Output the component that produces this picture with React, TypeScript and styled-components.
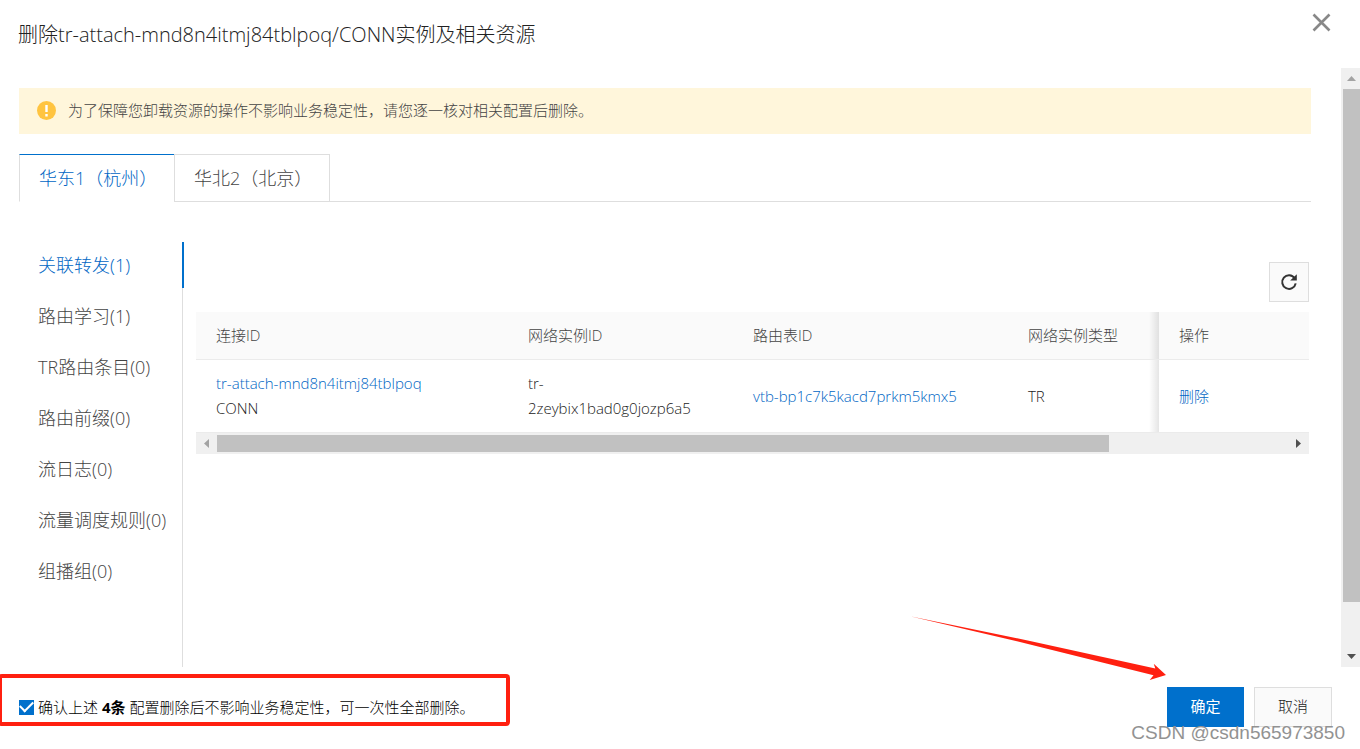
import React, { useState } from "react";
import styled, { createGlobalStyle, css } from "styled-components";

const color = {
  blue: "#0070cc",
  link: "#0066c4",
  red: "#ff2010",
  text: "#222222",
  muted: "#444444",
  line: "#dedede",
  soft: "#ebebeb",
  panel: "#fafafa",
  track: "#f0f0f0",
  thumb: "#c1c1c1",
};

const GlobalStyle = createGlobalStyle`
  * { box-sizing: border-box; }
  body {
    margin: 0;
    background: #fff;
    color: ${color.text};
    font-family: "Open Sans", "Noto Sans CJK SC", sans-serif;
    font-size: 15px;
    font-weight: 300;
    line-height: 25px;
  }
  button, input { font: inherit; color: inherit; margin: 0; }
  a { color: ${color.link}; text-decoration: none; }
  b { font-weight: 700; }
`;

const Dialog = styled.div`
  position: relative;
  display: flex;
  flex-direction: column;
  height: 100vh;
  overflow: hidden;
`;

const Header = styled.header`
  display: flex;
  flex: none;
  justify-content: space-between;
  align-items: flex-start;
  height: 68px;
  padding: 0 29px 0 18px;
`;

const Title = styled.h1`
  margin: 0;
  font-size: 20px;
  font-weight: 300;
  line-height: 70px;
`;

const CloseButton = styled.button`
  display: flex;
  margin-top: 13px;
  padding: 0;
  border: 0;
  background: none;
  cursor: pointer;
`;

const Body = styled.div`
  display: flex;
  flex: 1;
  min-height: 0;
`;

const Content = styled.main`
  display: flex;
  flex: 1;
  flex-direction: column;
  min-width: 0;
  padding: 20px 30px 0 19px;
`;

const Notice = styled.div`
  display: flex;
  flex: none;
  align-items: center;
  gap: 12px;
  height: 46px;
  padding: 0 18px 1px;
  background: #fff6db;
  color: ${color.muted};
`;

const Tabs = styled.div`
  display: flex;
  flex: none;
  height: 48px;
  margin-top: 20px;
  box-shadow: inset 0 -1px ${color.line};
`;

const Tab = styled.button<{ $active: boolean }>`
  width: 156px;
  padding: 0 19px;
  border: 1px solid ${color.line};
  background: #fff;
  color: ${color.muted};
  font-size: 18px;
  text-align: left;
  white-space: nowrap;
  cursor: pointer;
  & + & { margin-left: -1px; }
  ${(p) =>
    p.$active &&
    css`
      border-top-color: ${color.blue};
      border-bottom-color: #fff;
      border-right-color: #fff;
      color: ${color.link};
    `}
`;

const Panel = styled.div`
  display: flex;
  flex: 1;
  gap: 12px;
  min-height: 0;
  padding-top: 40px;
`;

const SideNav = styled.nav`
  display: flex;
  flex: none;
  flex-direction: column;
  gap: 5px;
  width: 165px;
  box-shadow: inset -1px 0 #fff, inset -2px 0 ${color.line};
`;

const NavItem = styled.button<{ $active: boolean }>`
  height: 46px;
  padding: 1px 0 0 19px;
  border: 0;
  border-right: 2px solid ${(p) => (p.$active ? color.blue : "transparent")};
  background: none;
  color: ${(p) => (p.$active ? color.link : color.muted)};
  font-size: 18px;
  text-align: left;
  white-space: nowrap;
  cursor: pointer;
`;

const TableArea = styled.section`
  display: flex;
  flex: 1;
  flex-direction: column;
  min-width: 0;
  padding: 20px 2px 0 0;
`;

const RefreshButton = styled.button`
  display: flex;
  align-self: flex-end;
  align-items: center;
  justify-content: center;
  width: 40px;
  height: 40px;
  margin-bottom: 10px;
  padding: 0;
  border: 1px solid ${color.line};
  background: ${color.panel};
  cursor: pointer;
`;

const Table = styled.table`
  width: 100%;
  border-collapse: separate;
  border-spacing: 0;
  table-layout: fixed;
`;

const cell = css<{ $fixed?: boolean }>`
  position: relative;
  padding: 11px 20px;
  border-bottom: 1px solid ${color.soft};
  text-align: left;
  font-weight: inherit;
  ${(p) =>
    p.$fixed &&
    css`
      &::before {
        content: "";
        position: absolute;
        top: 0;
        bottom: 0;
        right: 100%;
        width: 10px;
        background: linear-gradient(to right, rgba(0, 0, 0, 0), rgba(0, 0, 0, 0.1));
      }
    `}
`;

const HeadCell = styled.th`
  ${cell}
  height: 48px;
  background: ${color.panel};
  color: ${color.muted};
`;

const DataCell = styled.td`
  ${cell}
  height: 73px;
`;

const Line = styled.div``;

const HScroll = styled.div`
  display: flex;
  align-items: center;
  height: 21px;
  background: ${color.track};
`;

const VScroll = styled.div`
  display: flex;
  flex: none;
  flex-direction: column;
  width: 19px;
  padding-left: 2px;
  background: ${color.track};
`;

const ScrollButton = styled.button`
  display: flex;
  flex: none;
  align-items: center;
  justify-content: center;
  width: 21px;
  height: 21px;
  padding: 0;
  border: 0;
  background: none;
  ${VScroll} & { width: 17px; }
`;

const Rail = styled.div`
  flex: 1;
`;

const HThumb = styled.div`
  width: 83.3%;
  height: 17px;
  background: ${color.thumb};
`;

const VThumb = styled.div`
  height: 92.1%;
  background: ${color.thumb};
`;

const Footer = styled.footer`
  display: flex;
  flex: none;
  align-items: flex-start;
  justify-content: space-between;
  height: 82px;
  padding-right: 28px;
`;

const Highlight = styled.div`
  display: flex;
  align-items: center;
  width: 512px;
  height: 52px;
  margin: 7px 0 0 -2px;
  padding: 14px 0 0 17px;
  border: 4px solid ${color.red};
  border-radius: 4px;
  color: #000;
`;

const CheckLabel = styled.label`
  display: flex;
  align-items: center;
  white-space: pre;
`;

const Checkbox = styled.input`
  display: grid;
  place-items: center;
  width: 15px;
  height: 15px;
  margin-right: 4px;
  border: 1px solid ${color.blue};
  background: #fff;
  appearance: none;
  &:checked { background: ${color.blue}; }
  &:checked::after {
    content: "";
    width: 11px;
    height: 6px;
    margin-bottom: 4px;
    border: solid #fff;
    border-width: 0 0 2px 2px;
    transform: rotate(-45deg);
  }
`;

const Actions = styled.div`
  display: flex;
  gap: 10px;
  margin-top: 20px;
`;

const Button = styled.button<{ $primary?: boolean }>`
  width: ${(p) => (p.$primary ? 77 : 78)}px;
  height: 40px;
  padding: 0 0 2px;
  border: 1px solid ${(p) => (p.$primary ? color.blue : color.line)};
  background: ${(p) => (p.$primary ? color.blue : color.panel)};
  color: ${(p) => (p.$primary ? "#fff" : color.text)};
  font-weight: ${(p) => (p.$primary ? 400 : 300)};
  cursor: pointer;
`;

const Arrow = styled.svg`
  position: absolute;
  right: 190px;
  bottom: 64px;
  pointer-events: none;
`;

const Watermark = styled.div`
  position: absolute;
  right: 15px;
  bottom: 4px;
  color: #929292;
  font-family: "Liberation Sans", sans-serif;
  font-size: 19px;
  text-shadow: 1px 1px #fff;
  pointer-events: none;
`;

const triangles = {
  up: "0,5 9,5 4.5,0",
  down: "0,0 9,0 4.5,5",
  left: "5,0 5,9 0,4.5",
  right: "0,0 0,9 5,4.5",
};

function Triangle({ dir, fill }: { dir: keyof typeof triangles; fill: string }) {
  const upright = dir === "up" || dir === "down";
  return (
    <svg width={upright ? 9 : 5} height={upright ? 5 : 9} aria-hidden="true">
      <polygon points={triangles[dir]} fill={fill} />
    </svg>
  );
}

const regions = ["华东1（杭州）", "华北2（北京）"];
const sections = [
  "关联转发(1)",
  "路由学习(1)",
  "TR路由条目(0)",
  "路由前缀(0)",
  "流日志(0)",
  "流量调度规则(0)",
  "组播组(0)",
];

export default function App() {
  const [region, setRegion] = useState(0);
  const [section, setSection] = useState(0);
  const [confirmed, setConfirmed] = useState(true);

  return (
    <>
      <GlobalStyle />
      <Dialog role="dialog" aria-labelledby="dialog-title">
        <Header>
          <Title id="dialog-title">删除tr-attach-mnd8n4itmj84tblpoq/CONN实例及相关资源</Title>
          <CloseButton aria-label="关闭">
            <svg width="19" height="19" fill="none" stroke="#888" strokeWidth="2.6">
              <path d="M1.5 1.5l16 16M17.5 1.5l-16 16" />
            </svg>
          </CloseButton>
        </Header>

        <Body>
          <Content>
            <Notice role="alert">
              <svg width="19" height="19" aria-hidden="true">
                <circle cx="9.5" cy="9.5" r="9.5" fill="#ffc440" />
                <path d="M9.5 4v7M9.5 13v2.4" stroke="#fff" strokeWidth="2.4" />
              </svg>
              为了保障您卸载资源的操作不影响业务稳定性，请您逐一核对相关配置后删除。
            </Notice>

            <Tabs role="tablist">
              {regions.map((name, i) => (
                <Tab
                  key={name}
                  role="tab"
                  aria-selected={i === region}
                  $active={i === region}
                  onClick={() => setRegion(i)}
                >
                  {name}
                </Tab>
              ))}
            </Tabs>

            <Panel>
              <SideNav>
                {sections.map((name, i) => (
                  <NavItem key={name} $active={i === section} onClick={() => setSection(i)}>
                    {name}
                  </NavItem>
                ))}
              </SideNav>

              <TableArea>
                <RefreshButton aria-label="刷新">
                  <svg width="18" height="18" viewBox="0 0 18 18" fill="none">
                    <path
                      d="M14.6 5.2A6.8 6.8 0 1 0 15.7 10.4"
                      stroke="#333"
                      strokeWidth="2"
                    />
                    <path d="M16.8 1.2V7.6H10.2z" fill="#333" />
                  </svg>
                </RefreshButton>
                <Table>
                  <colgroup>
                    <col />
                    <col width="225" />
                    <col width="275" />
                    <col width="151" />
                    <col width="150" />
                  </colgroup>
                  <thead>
                    <tr>
                      <HeadCell>连接ID</HeadCell>
                      <HeadCell>网络实例ID</HeadCell>
                      <HeadCell>路由表ID</HeadCell>
                      <HeadCell>网络实例类型</HeadCell>
                      <HeadCell $fixed>操作</HeadCell>
                    </tr>
                  </thead>
                  <tbody>
                    <tr>
                      <DataCell>
                        <Line>
                          <a href="#attachment">tr-attach-mnd8n4itmj84tblpoq</a>
                        </Line>
                        <Line>CONN</Line>
                      </DataCell>
                      <DataCell>
                        tr-
                        <br />
                        2zeybix1bad0g0jozp6a5
                      </DataCell>
                      <DataCell>
                        <a href="#route-table">vtb-bp1c7k5kacd7prkm5kmx5</a>
                      </DataCell>
                      <DataCell>TR</DataCell>
                      <DataCell $fixed>
                        <a href="#delete">删除</a>
                      </DataCell>
                    </tr>
                  </tbody>
                </Table>
                <HScroll>
                  <ScrollButton aria-label="向左滚动">
                    <Triangle dir="left" fill="#a3a3a3" />
                  </ScrollButton>
                  <Rail>
                    <HThumb />
                  </Rail>
                  <ScrollButton aria-label="向右滚动">
                    <Triangle dir="right" fill="#505050" />
                  </ScrollButton>
                </HScroll>
              </TableArea>
            </Panel>
          </Content>

          <VScroll>
            <ScrollButton aria-label="向上滚动">
              <Triangle dir="up" fill="#a3a3a3" />
            </ScrollButton>
            <Rail>
              <VThumb />
            </Rail>
            <ScrollButton aria-label="向下滚动">
              <Triangle dir="down" fill="#505050" />
            </ScrollButton>
          </VScroll>
        </Body>

        <Footer>
          <Highlight>
            <CheckLabel>
              <Checkbox
                type="checkbox"
                checked={confirmed}
                onChange={(e) => setConfirmed(e.target.checked)}
              />
              <span>
                确认上述 <b>4条</b> 配置删除后不影响业务稳定性，可一次性全部删除。
              </span>
            </CheckLabel>
          </Highlight>
          <Actions>
            <Button $primary>确定</Button>
            <Button>取消</Button>
          </Actions>
        </Footer>

        <Arrow width="260" height="70" viewBox="0 0 260 70" aria-hidden="true">
          <path
            d="M0 1.3L120 26L245.3 53.6L243.7 48.7L256 60L239.7 65L243.5 60.2L120 29.4Z"
            fill={color.red}
          />
        </Arrow>
        <Watermark>CSDN @csdn565973850</Watermark>
      </Dialog>
    </>
  );
}
